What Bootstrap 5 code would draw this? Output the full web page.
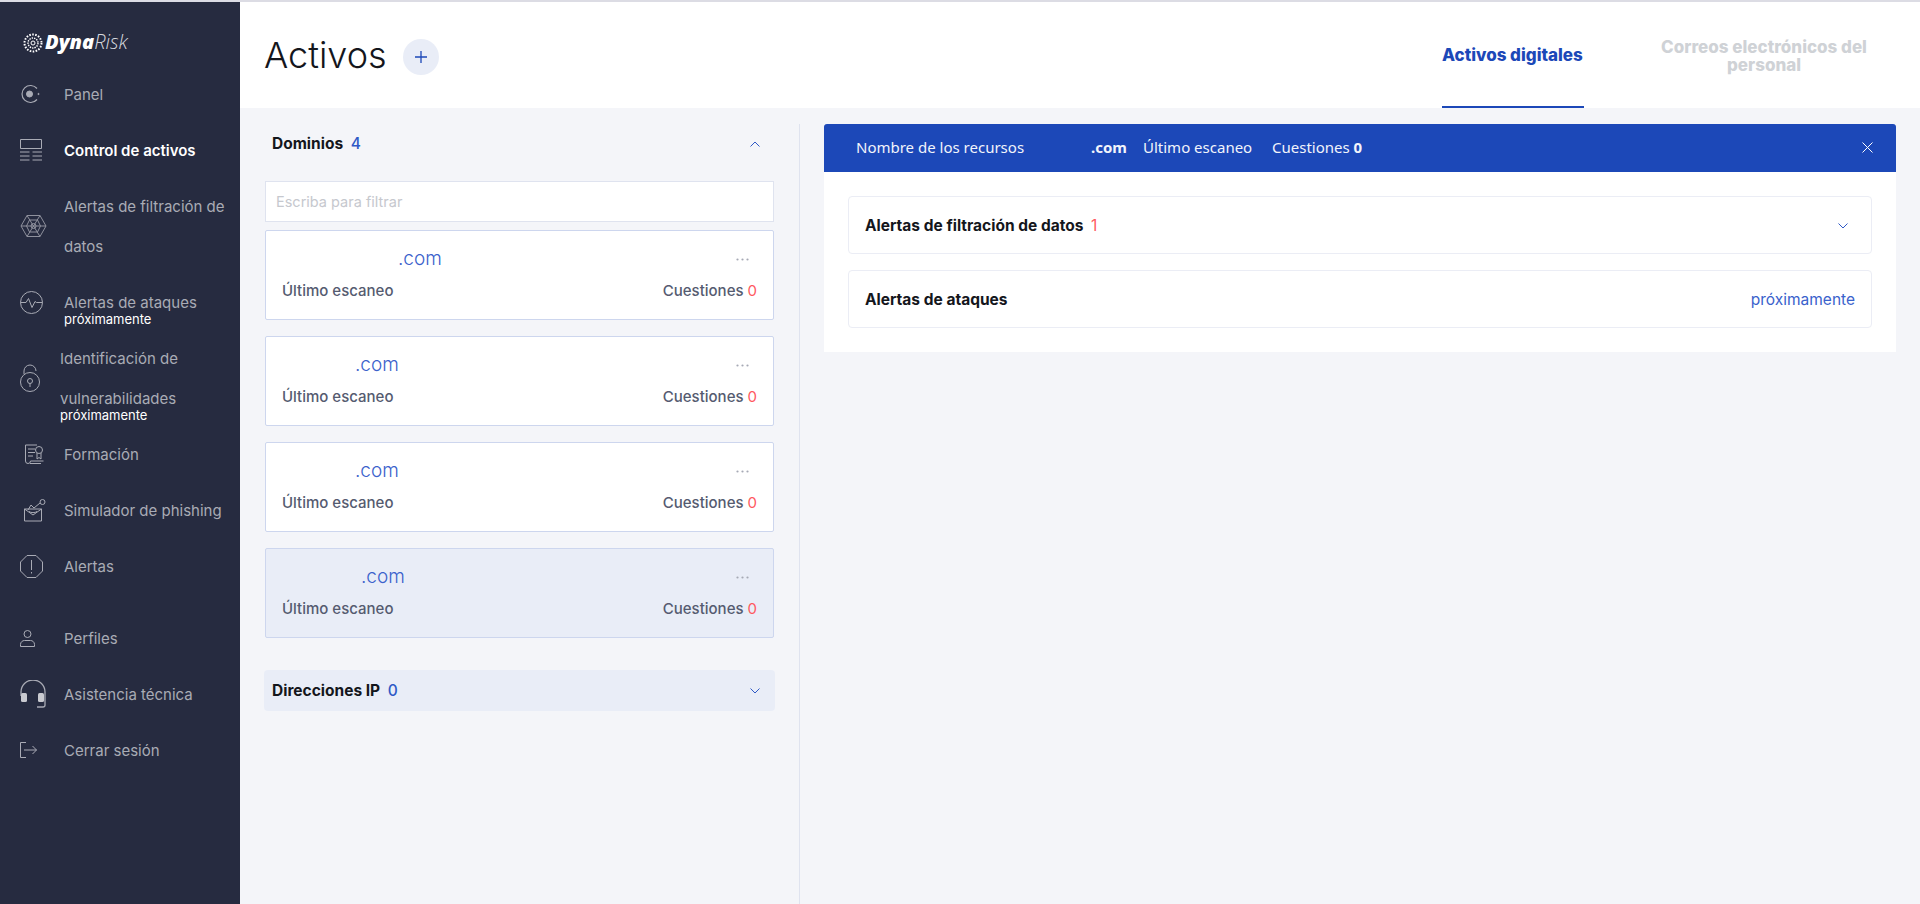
<!DOCTYPE html>
<html lang="es">
<head>
    <meta charset="UTF-8">
    <title>Activos</title>
    <link href="https://cdn.jsdelivr.net/npm/bootstrap@5.3.0/dist/css/bootstrap.min.css" rel="stylesheet">
    <style>
        html, body {
            height: 100%;
            overflow: hidden;
        }

        body {
            background-color: #f4f5f9;
            border-top: 2px solid #dcdce4;
            font-family: Inter, "Liberation Sans", sans-serif;
            font-size: 15px;
        }

        .app-wrap {
            height: 902px;
        }

        .side-bar {
            width: 240px;
            flex: 0 0 240px;
            background-color: #262b40;
            color: #a9abb5;
        }

        .side-logo {
            height: 73px;
            padding: 27px 0 0 22px;
            color: #fff;
            font-family: "Open Sans", sans-serif;
            font-size: 20px;
            line-height: 26px;
            font-style: italic;
        }

        .side-logo b {
            font-weight: 800;
        }

        .side-logo span {
            font-weight: 300;
            color: #d7d8de;
        }

        .side-logo svg {
            margin-right: 1px;
        }

        .side-item {
            padding-left: 20px;
            margin-bottom: 16px;
            line-height: 40px;
            font-size: 15px;
        }

        .side-item svg {
            flex: 0 0 auto;
            fill: none;
            stroke: #a9abb5;
            stroke-width: 1;
        }

        .side-icon {
            width: 44px;
            flex: 0 0 44px;
            margin-top: -2px;
        }

        .side-icon.tight {
            width: 40px;
            flex-basis: 40px;
        }

        .side-icon .web-icon {
            stroke: #8e909c;
        }

        .side-item.active-item {
            color: #fff;
            font-weight: 600;
        }

        .side-soon {
            display: block;
            color: #fff;
            font-size: 13px;
            line-height: 14px;
            margin-top: -11px;
            margin-bottom: -3px;
        }

        .side-gap {
            height: 16px;
        }

        .top-head {
            height: 106px;
            background-color: #fff;
            padding-left: 24px;
        }

        .title-wrap {
            padding-top: 4px;
        }

        .page-title {
            font-size: 36px;
            font-weight: 300;
            color: #14161c;
            margin: 0;
            line-height: 1;
            padding-bottom: 4px;
        }

        .add-btn {
            width: 36px;
            height: 36px;
            margin-left: 16px;
            background-color: #e9edf7;
            border-radius: 50%;
        }

        .tab-one {
            width: 142px;
            margin-right: 62px;
            padding-top: 4px;
            color: #1c48b8;
            font-weight: 800;
            font-size: 17px;
            border-bottom: 2px solid #1c48b8;
            white-space: nowrap;
        }

        .tab-two {
            width: 236px;
            margin-right: 38px;
            padding-top: 2px;
            color: #cfd2d6;
            font-weight: 800;
            font-size: 17px;
            line-height: 18px;
            text-align: center;
        }

        .left-col {
            width: 560px;
            flex: 0 0 560px;
            margin-top: 16px;
            padding: 0 25px;
            border-right: 1px solid #dfe3ef;
        }

        .group-head {
            height: 38px;
            padding: 2px 14px 0 7px;
            font-size: 15.500px;
            font-weight: 700;
            color: #14161c;
        }

        .count-blue {
            color: #2f59c6;
            font-weight: 500;
            margin-left: 4px;
        }

        .filter-box.form-control {
            height: 41px;
            margin: 19px 0 8px;
            border: 1px solid #dfe3ef;
            border-radius: 0;
            font-size: 14.500px;
            padding: 0 10px;
        }

        .filter-box::placeholder {
            color: #c6c8ce;
        }

        .domain-card {
            height: 90px;
            margin-bottom: 16px;
            padding: 16px;
            background-color: #fff;
            border: 1px solid #cdd6ee;
            border-radius: 2px;
            color: #555b70;
            font-weight: 500;
        }

        .domain-card.picked {
            background-color: #e9edf7;
        }

        .domain-name {
            color: #3a62cc;
            font-size: 19px;
            line-height: 24px;
            height: 24px;
            font-weight: 300;
        }

        .name-one {
            margin-left: 116px;
        }

        .name-two {
            margin-left: 73px;
        }

        .name-three {
            margin-left: 79px;
        }

        .dots {
            width: 13px;
            margin-right: 8px;
        }

        .domain-meta {
            margin-top: 8px;
            line-height: 24px;
        }

        .num-red {
            color: #ff5a5f;
            font-weight: 400;
        }

        .ip-bar {
            height: 41px;
            margin: 32px -1px 0;
            padding: 1px 15px 0 8px;
            background-color: #e9edf7;
            border-radius: 4px;
            font-size: 15.500px;
            font-weight: 700;
            color: #14161c;
        }

        .right-col {
            padding: 16px 24px 0;
        }

        .detail-card {
            width: 1072px;
            height: 228px;
            background-color: #fff;
        }

        .detail-head {
            height: 48px;
            padding: 0 23px 2px 32px;
            background-color: #1c48b8;
            color: #f2f4fb;
            border-radius: 3px 3px 0 0;
            font-family: "Noto Sans", sans-serif;
            font-size: 15px;
        }

        .head-name {
            width: 235px;
        }

        .head-com {
            width: 52px;
        }

        .head-scan {
            width: 129px;
        }

        .detail-body {
            padding: 24px;
        }

        .detail-row {
            height: 58px;
            margin-bottom: 16px;
            padding: 2px 16px 0;
            border: 1px solid #ebedf5;
            border-radius: 4px;
            font-size: 15.500px;
            font-weight: 700;
            color: #14161c;
        }

        .row-chevron {
            margin-right: 7px;
        }

        .soon-link {
            color: #3a62cc;
            font-weight: 400;
        }
    </style>
</head>
<body>
<div class="app-wrap d-flex">
    <nav class="side-bar">
        <div class="side-logo d-flex align-items-start">
            <svg width="22" height="20" viewBox="0 0 22 20" class="mt-1" fill="none" stroke="#fff">
                <circle cx="11" cy="10" r="8.500" stroke-width="2" stroke-dasharray="1.600 1.400"/>
                <circle cx="11" cy="10" r="5" stroke-width="1.400" stroke-dasharray="1.400 1"/>
                <circle cx="11" cy="10" r="2" stroke-width="1"/>
            </svg>
            <div><b>Dyna</b><span>Risk</span></div>
        </div>

        <div class="side-item d-flex align-items-center">
            <div class="side-icon"><svg width="20" height="20" viewBox="0 0 20 20" class="d-block"><path d="M17 4.500A8.500 8.500 0 1 0 17 15.500" stroke-width="1.200"/><circle cx="9.500" cy="10" r="3" fill="#a9abb5"/><circle cx="18.500" cy="10" r=".6" fill="#a9abb5"/></svg></div>
            <div>Panel</div>
        </div>
        <div class="side-item active-item d-flex align-items-center">
            <div class="side-icon"><svg width="22" height="22" viewBox="0 0 22 22" class="d-block"><path d="M.5.500h21v9H.5zM0 13h9.500M12.500 13H22M0 17h9.500M12.500 17H22M0 21h9.500M12.500 21H22"/></svg></div>
            <div>Control de activos</div>
        </div>
        <div class="side-item d-flex align-items-center">
            <div class="side-icon"><svg width="27" height="24" viewBox="0 0 27 24" class="d-block web-icon"><path d="M7 1.500h13L26 12l-6 10.500H7L1 12zM7 1.500l13 21M20 1.500l-13 21M1 12h25M9.500 6h8l3 6-3 6h-8l-3-6z"/><circle cx="13.500" cy="12" r="2.500"/></svg></div>
            <div>Alertas de filtración de<br>datos</div>
        </div>
        <div class="side-item d-flex align-items-center">
            <div class="side-icon"><svg width="23" height="23" viewBox="0 0 23 23" class="d-block"><circle cx="11.500" cy="11.500" r="11"/><path d="M.5 11.500H6l2.500-4 3.500 9 3-6 1.500 1h6"/></svg></div>
            <div>Alertas de ataques<span class="side-soon">próximamente</span></div>
        </div>
        <div class="side-item d-flex align-items-center">
            <div class="side-icon tight"><svg width="21" height="28" viewBox="0 0 21 28" class="d-block"><path d="M4 10V7a6 6 0 0 1 12 0"/><circle cx="10" cy="18" r="9.500"/><circle cx="10" cy="17" r="2.500"/><path d="M10 19.500V23"/></svg></div>
            <div>Identificación de<br>vulnerabilidades<span class="side-soon">próximamente</span></div>
        </div>
        <div class="side-item d-flex align-items-center">
            <div class="side-icon"><svg width="21" height="21" viewBox="0 0 21 21" class="d-block ms-1"><path d="M13 1H1.500v16a2.500 2.500 0 0 0 5 0h13M6 19.500h11M4 5h7M4 8.500h7M4 12h5"/><circle cx="15" cy="6" r="3.500"/><path d="M13 9v6l2-1.500 2 1.500V9"/></svg></div>
            <div>Formación</div>
        </div>
        <div class="side-item d-flex align-items-center">
            <div class="side-icon"><svg width="22" height="23" viewBox="0 0 22 23" class="d-block ms-1"><path d="M.5 10h17v12H.5zM.5 10l8.500 6 8.500-6M4 11l3-5 3 3M10 9l6-5"/><circle cx="18.500" cy="3" r="2.500"/><path d="M5 12.500c2 1.500 6 1.500 8 0"/></svg></div>
            <div>Simulador de phishing</div>
        </div>
        <div class="side-item d-flex align-items-center">
            <div class="side-icon"><svg width="23" height="23" viewBox="0 0 23 23" class="d-block"><path d="M7 .5h9l6.500 6.500v9L16 22.500H7L.5 16V7zM11.500 5v10M11.500 17v1.500"/></svg></div>
            <div>Alertas</div>
        </div>
        <div class="side-gap"></div>
        <div class="side-item d-flex align-items-center">
            <div class="side-icon"><svg width="15" height="17" viewBox="0 0 15 17" class="d-block"><circle cx="7.500" cy="4" r="3.500"/><path d="M.5 16.500v-2c0-2.500 2-4 4-4h6c2 0 4 1.500 4 4v2z"/></svg></div>
            <div>Perfiles</div>
        </div>
        <div class="side-item d-flex align-items-center">
            <div class="side-icon"><svg width="26" height="28" viewBox="0 0 26 28" class="d-block"><path d="M1 16V12a12 12 0 0 1 24 0v13q0 2-2 2h-6" stroke-width="1.300"/><rect x="1" y="13" width="6" height="9" rx="1.500" fill="#c9cad0" stroke="none"/><rect x="18" y="13" width="6" height="9" rx="1.500" fill="#c9cad0" stroke="none"/></svg></div>
            <div>Asistencia técnica</div>
        </div>
        <div class="side-item d-flex align-items-center">
            <div class="side-icon"><svg width="17" height="16" viewBox="0 0 17 16" class="d-block"><path d="M6 .5H.5v15H6M4 8h12.500M12.500 4l4 4-4 4"/></svg></div>
            <div>Cerrar sesión</div>
        </div>
    </nav>

    <main class="flex-grow-1 d-flex flex-column">
        <header class="top-head d-flex justify-content-between">
            <div class="title-wrap d-flex align-items-center">
                <h1 class="page-title">Activos</h1>
                <div class="add-btn d-flex align-items-center justify-content-center">
                    <svg width="14" height="14" viewBox="0 0 14 14" fill="none" stroke="#1c48b8" stroke-width="1.300"><path d="M7 1v12M1 7h12"/></svg>
                </div>
            </div>
            <div class="d-flex">
                <div class="tab-one d-flex align-items-center">Activos digitales</div>
                <div class="tab-two d-flex align-items-center justify-content-center">Correos electrónicos del personal</div>
            </div>
        </header>

        <div class="d-flex flex-grow-1">
            <section class="left-col">
                <div class="group-head d-flex align-items-center justify-content-between">
                    <div>Dominios <span class="count-blue">4</span></div>
                    <svg width="10" height="6" viewBox="0 0 10 6" fill="none" stroke="#2f59c6"><path d="M.5 5.500 5 1l4.500 4.500"/></svg>
                </div>
                <input type="text" class="form-control filter-box" placeholder="Escriba para filtrar">

                <div class="domain-card">
                    <div class="d-flex justify-content-between align-items-center">
                        <div class="domain-name name-one">.com</div>
                        <svg class="dots" height="3" viewBox="0 0 13 3" fill="#a6a9b5"><circle cx="1.500" cy="1.500" r="1.100"/><circle cx="6.500" cy="1.500" r="1.100"/><circle cx="11.500" cy="1.500" r="1.100"/></svg>
                    </div>
                    <div class="domain-meta d-flex justify-content-between"><span>Último escaneo</span><span>Cuestiones <span class="num-red">0</span></span></div>
                </div>
                <div class="domain-card">
                    <div class="d-flex justify-content-between align-items-center">
                        <div class="domain-name name-two">.com</div>
                        <svg class="dots" height="3" viewBox="0 0 13 3" fill="#a6a9b5"><circle cx="1.500" cy="1.500" r="1.100"/><circle cx="6.500" cy="1.500" r="1.100"/><circle cx="11.500" cy="1.500" r="1.100"/></svg>
                    </div>
                    <div class="domain-meta d-flex justify-content-between"><span>Último escaneo</span><span>Cuestiones <span class="num-red">0</span></span></div>
                </div>
                <div class="domain-card">
                    <div class="d-flex justify-content-between align-items-center">
                        <div class="domain-name name-two">.com</div>
                        <svg class="dots" height="3" viewBox="0 0 13 3" fill="#a6a9b5"><circle cx="1.500" cy="1.500" r="1.100"/><circle cx="6.500" cy="1.500" r="1.100"/><circle cx="11.500" cy="1.500" r="1.100"/></svg>
                    </div>
                    <div class="domain-meta d-flex justify-content-between"><span>Último escaneo</span><span>Cuestiones <span class="num-red">0</span></span></div>
                </div>
                <div class="domain-card picked">
                    <div class="d-flex justify-content-between align-items-center">
                        <div class="domain-name name-three">.com</div>
                        <svg class="dots" height="3" viewBox="0 0 13 3" fill="#a6a9b5"><circle cx="1.500" cy="1.500" r="1.100"/><circle cx="6.500" cy="1.500" r="1.100"/><circle cx="11.500" cy="1.500" r="1.100"/></svg>
                    </div>
                    <div class="domain-meta d-flex justify-content-between"><span>Último escaneo</span><span>Cuestiones <span class="num-red">0</span></span></div>
                </div>

                <div class="ip-bar d-flex align-items-center justify-content-between">
                    <div>Direcciones IP <span class="count-blue">0</span></div>
                    <svg width="10" height="6" viewBox="0 0 10 6" fill="none" stroke="#2f59c6"><path d="M.5.500 5 5 9.500.500"/></svg>
                </div>
            </section>

            <section class="right-col">
                <div class="detail-card">
                    <div class="detail-head d-flex align-items-center justify-content-between">
                        <div class="d-flex">
                            <span class="head-name">Nombre de los recursos</span>
                            <b class="head-com">.com</b>
                            <span class="head-scan">Último escaneo</span>
                            <span>Cuestiones <b>0</b></span>
                        </div>
                        <svg width="11" height="11" viewBox="0 0 11 11" fill="none" stroke="#fff"><path d="m.5.500 10 10M10.500.500l-10 10"/></svg>
                    </div>
                    <div class="detail-body">
                        <div class="detail-row d-flex align-items-center justify-content-between">
                            <div>Alertas de filtración de datos <span class="num-red ms-1">1</span></div>
                            <svg width="10" height="6" viewBox="0 0 10 6" fill="none" stroke="#2f59c6" class="row-chevron"><path d="M.5.500 5 5 9.500.500"/></svg>
                        </div>
                        <div class="detail-row d-flex align-items-center justify-content-between">
                            <div>Alertas de ataques</div>
                            <div class="soon-link">próximamente</div>
                        </div>
                    </div>
                </div>
            </section>
        </div>
    </main>
</div>

<script src="https://cdn.jsdelivr.net/npm/bootstrap@5.3.0/dist/js/bootstrap.bundle.min.js"></script>
</body>
</html>
